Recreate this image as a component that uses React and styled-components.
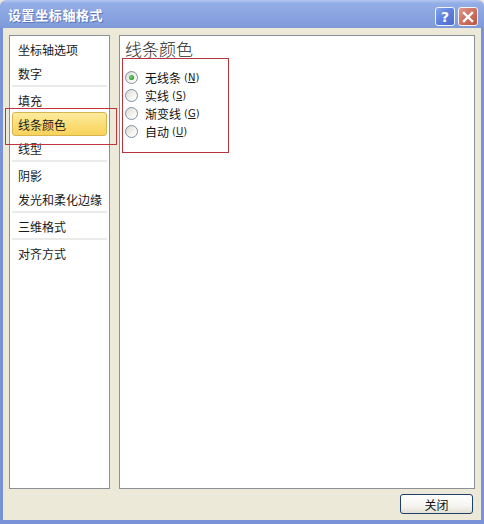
import React from 'react';
import styled, { createGlobalStyle } from 'styled-components';

const categories = [
  ['坐标轴选项', '数字'],
  ['填充', '线条颜色', '线型'],
  ['阴影', '发光和柔化边缘'],
  ['三维格式'],
  ['对齐方式'],
];

const lineOptions = [
  { label: '无线条', key: 'N', checked: true },
  { label: '实线', key: 'S' },
  { label: '渐变线', key: 'G' },
  { label: '自动', key: 'U' },
];

const App = () => {
  const selected = '线条颜色';

  return (
    <>
      <GlobalStyle />
      <Dialog>
        <TitleBar>
          <Title>设置坐标轴格式</Title>
          <TitleButtons>
            <CaptionButton kind="help">?</CaptionButton>
            <CaptionButton kind="close">
              <svg width="12" height="12" viewBox="0 0 12 12">
                <path d="M2 2 L10 10 M10 2 L2 10" stroke="#fff" strokeWidth="2.4" strokeLinecap="square" />
              </svg>
            </CaptionButton>
          </TitleButtons>
        </TitleBar>
        <Frame>
          <Body>
            <NavPanel>
              {categories.map((group, gi) => (
                <React.Fragment key={gi}>
                  {gi > 0 && <NavSeparator />}
                  {group.map((name) => (
                    <NavItem key={name} active={name === selected}>
                      {name}
                    </NavItem>
                  ))}
                </React.Fragment>
              ))}
            </NavPanel>
            <ContentPanel>
              <Heading>线条颜色</Heading>
              <OptionGroup>
                {lineOptions.map((opt) => (
                  <OptionRow key={opt.key}>
                    <Radio checked={opt.checked} />
                    <OptionLabel>{opt.label}</OptionLabel>
                    <Accel>
                      (<u>{opt.key}</u>)
                    </Accel>
                  </OptionRow>
                ))}
              </OptionGroup>
            </ContentPanel>
            {/* rectangle drawn over the selected category */}
            <Marker />
          </Body>
          <Footer>
            <PushButton>关闭</PushButton>
          </Footer>
        </Frame>
      </Dialog>
    </>
  );
};

export default App;

const GlobalStyle = createGlobalStyle`
  html, body {
    margin: 0;
    padding: 0;
    background: #ece9d8;
  }
  * {
    box-sizing: border-box;
  }
`;

const Dialog = styled.div`
  width: 484px;
  height: 524px;
  display: flex;
  flex-direction: column;
  font-family: "Noto Sans CJK SC", "Noto Sans", sans-serif;
  font-size: 12px;
  color: #111;
`;

const TitleBar = styled.div`
  height: 28px;
  display: flex;
  align-items: center;
  justify-content: space-between;
  padding: 0 6px 0 8px;
  background: linear-gradient(to bottom, #b3c6f0 0%, #93ade6 12%, #88a3e0 60%, #7f9ad9 100%);
  border-radius: 6px 6px 0 0;
`;

const Title = styled.div`
  color: #fff;
  font-size: 13px;
  font-weight: 700;
  letter-spacing: 0.6px;
  text-shadow: 1px 1px 0 #5d74b8;
  margin-top: 1px;
`;

const TitleButtons = styled.div`
  display: flex;
  gap: 3px;
  margin-top: 5px;
`;

const CaptionButton = styled.div`
  width: 20px;
  height: 19px;
  border-radius: 3px;
  border: 1px solid #f2f4fb;
  display: flex;
  align-items: center;
  justify-content: center;
  color: #fff;
  font-family: "DejaVu Sans", sans-serif;
  font-weight: 700;
  font-size: 14px;
  background: ${(p) =>
    p.kind === 'close'
      ? 'linear-gradient(135deg, #e1998a 0%, #cf7563 45%, #b9553f 100%)'
      : 'linear-gradient(135deg, #8aa6ec 0%, #5f83df 45%, #4a6ccd 100%)'};
`;

const Frame = styled.div`
  flex: 1;
  display: flex;
  flex-direction: column;
  background: #ece9d8;
  border-left: 3px solid #7a93d8;
  border-right: 3px solid #7a93d8;
  border-bottom: 4px solid #7a93d8;
`;

const Body = styled.div`
  position: relative;
  display: flex;
  gap: 9px;
  padding: 7px 6px 0 6px;
`;

const NavPanel = styled.div`
  width: 101px;
  height: 454px;
  background: #fff;
  border: 1px solid #8b9096;
  padding: 1px 2px;
  display: flex;
  flex-direction: column;
`;

const NavItem = styled.div`
  height: 24px;
  display: flex;
  align-items: center;
  padding-left: 5px;
  white-space: nowrap;
  color: #1a1a1a;
  border: 1px solid ${(p) => (p.active ? '#d6b54e' : 'transparent')};
  border-radius: 3px;
  background: ${(p) => (p.active ? 'linear-gradient(to bottom, #fdeb9f 0%, #fbde78 50%, #f8d25b 100%)' : 'transparent')};
`;

const NavSeparator = styled.div`
  height: 3px;
  border-top: 2px solid #ebebeb;
`;

const ContentPanel = styled.div`
  flex: 1;
  height: 454px;
  background: #fff;
  border: 1px solid #8b9096;
  padding: 4px 0 0 2px;
`;

const Heading = styled.div`
  height: 18px;
  line-height: 18px;
  padding-left: 3px;
  font-size: 17px;
  color: #2b2b2b;
  font-weight: 300;
`;

const OptionGroup = styled.div`
  width: 107px;
  height: 95px;
  border: 1px solid #b8343c;
  padding: 9px 0 0 2px;
  display: flex;
  flex-direction: column;
`;

const OptionRow = styled.div`
  height: 18px;
  display: flex;
  align-items: center;
`;

const OptionLabel = styled.span`
  margin-left: 7px;
`;

const Radio = styled.span`
  width: 13px;
  height: 13px;
  border-radius: 50%;
  border: 1px solid #7f90a3;
  background: linear-gradient(135deg, #d9d8cf 0%, #f4f3ee 55%, #ffffff 100%);
  display: flex;
  align-items: center;
  justify-content: center;

  &::after {
    content: '';
    width: 5px;
    height: 5px;
    border-radius: 50%;
    background: radial-gradient(circle at 40% 40%, #7fd47f 0%, #2ea32e 60%, #1c7d1c 100%);
    display: ${(p) => (p.checked ? 'block' : 'none')};
  }
`;

const Accel = styled.span`
  margin-left: 3px;
  font-family: "DejaVu Sans", sans-serif;
  font-size: 10px;
  color: #222;

  u {
    text-underline-offset: 1px;
  }
`;

const Marker = styled.div`
  position: absolute;
  left: 2px;
  top: 80px;
  width: 112px;
  height: 37px;
  border: 1px solid #c0343c;
  pointer-events: none;
`;

const Footer = styled.div`
  flex: 1;
  display: flex;
  justify-content: flex-end;
  align-items: flex-start;
  padding: 5px 8px 0 0;
`;

const PushButton = styled.button`
  width: 73px;
  height: 20px;
  padding: 0;
  font-family: "Noto Sans CJK SC", sans-serif;
  font-size: 12px;
  color: #111;
  border: 1px solid #1c3f6e;
  border-radius: 3px;
  background: linear-gradient(to bottom, #ffffff 0%, #f5f4ef 60%, #e3e0d3 100%);
`;
